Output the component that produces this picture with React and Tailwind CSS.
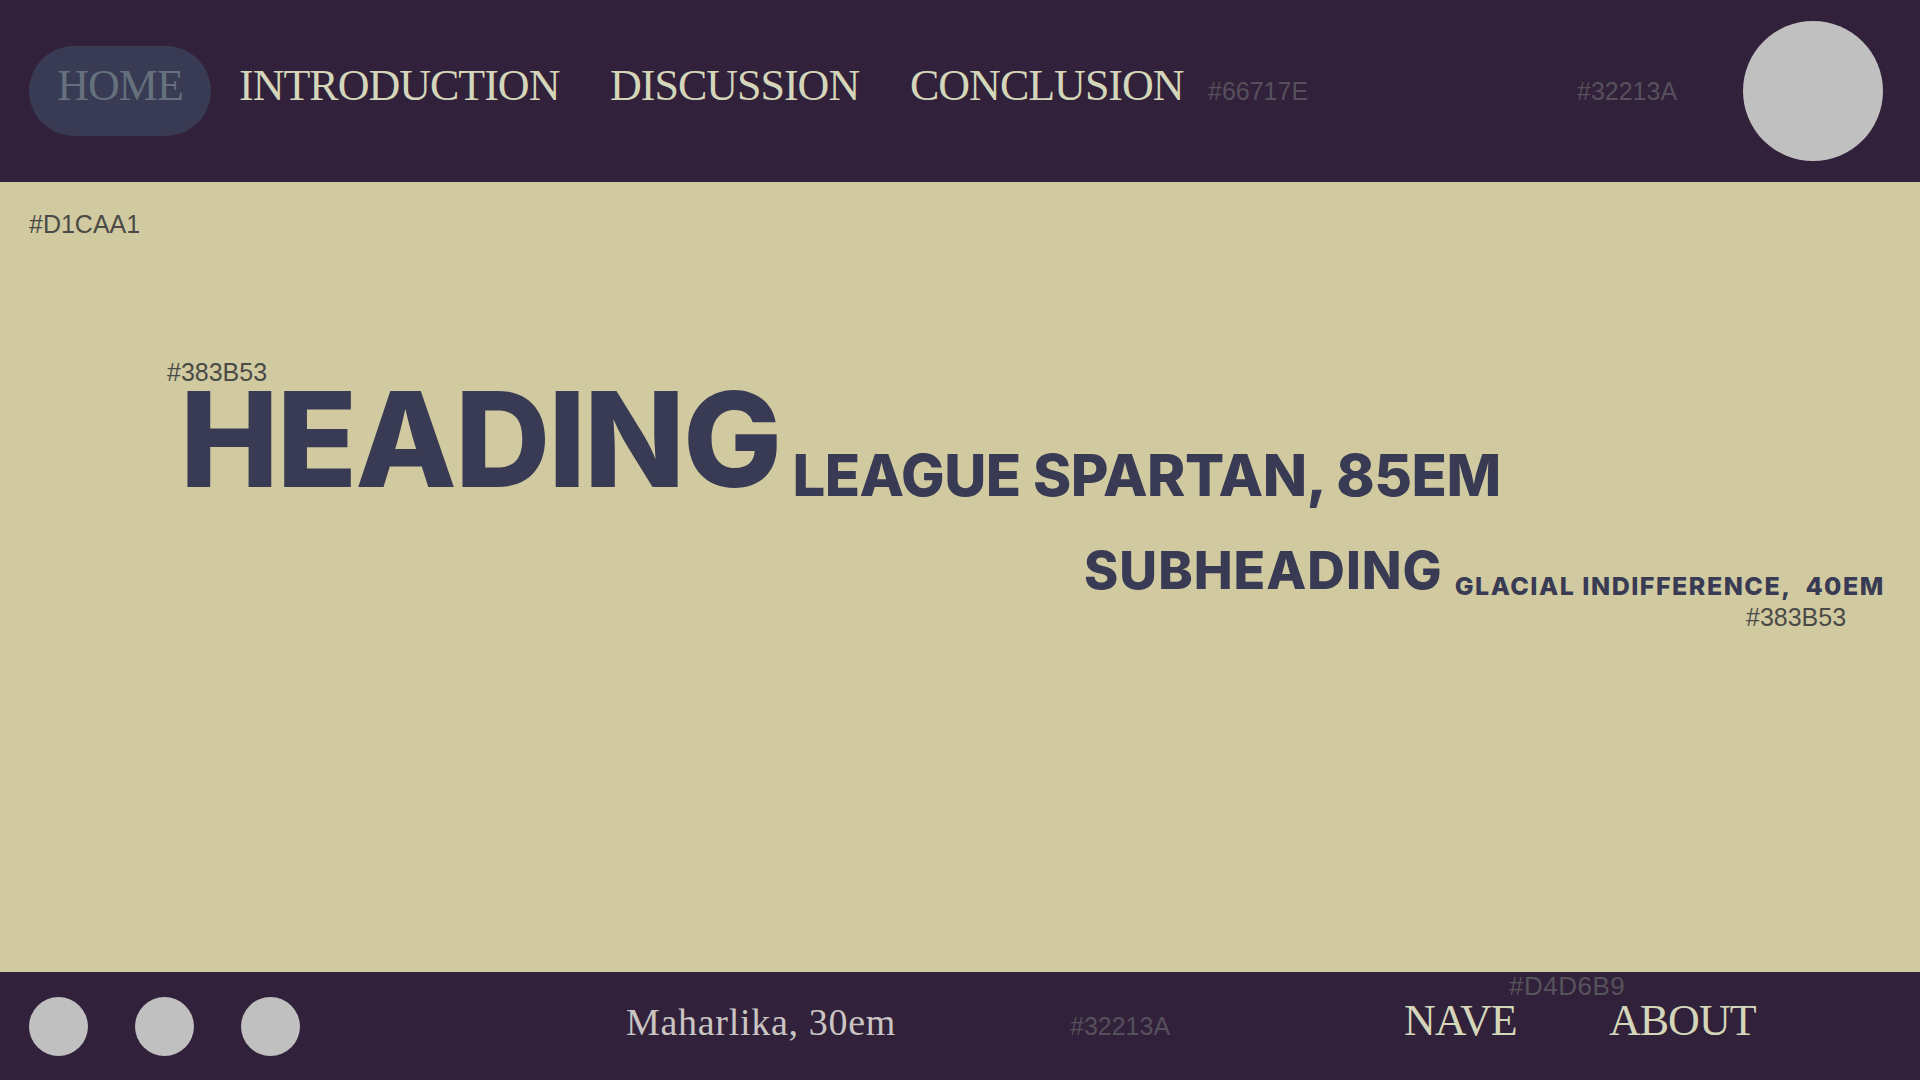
import React from "react";

const label = "font-['Liberation_Sans',sans-serif] text-[25px] leading-[18px] whitespace-nowrap";
const serif = "font-['Liberation_Serif',serif] whitespace-nowrap";
const spartan = "font-['Inter',sans-serif] font-extrabold text-[#383B53] whitespace-nowrap";

const NavItem = ({ children, width }) => (
  <div className={`${width} mb-[10px]`}>
    <span className={`${serif} text-[44px] leading-none tracking-[-1px] text-[#D4D6B9]`}>
      {children}
    </span>
  </div>
);

const Dot = ({ size }) => <div className={`${size} rounded-full bg-[#C0C0C0] shrink-0`}></div>;

const App = () => {
  return (
    <div className="w-[1920px] h-[1080px] flex flex-col overflow-hidden">
      {/* top bar */}
      <header className="h-[182px] bg-[#32213A] flex items-center pl-[29px] shrink-0">
        <div className="w-[182px] h-[90px] rounded-full bg-[#383B53] flex items-center justify-center shrink-0">
          <span className={`${serif} text-[44px] leading-none tracking-[-1px] text-[#66717E] mb-[10px]`}>HOME</span>
        </div>
        <div className="w-[28px] shrink-0"></div>
        <NavItem width="w-[371px]">INTRODUCTION</NavItem>
        <NavItem width="w-[300px]">DISCUSSION</NavItem>
        <NavItem width="w-[298px]">CONCLUSION</NavItem>
        <div className={`${label} w-[369px] text-[#56505c]`}>#66717E</div>
        <div className={`${label} w-[166px] text-[#56505c]`}>#32213A</div>
        <Dot size="w-[140px] h-[140px]" />
      </header>

      {/* body */}
      <main className="h-[790px] bg-[#D1CAA1] flex flex-col pl-[29px] pt-[33px] shrink-0">
        <div className={`${label} text-[#4a4a47]`}>#D1CAA1</div>

        <div className={`${label} text-[#4a4a47] ml-[138px] mt-[130px]`}>#383B53</div>
        <div className="flex items-end ml-[151px] mt-[2px]">
          <span className={`${spartan} text-[132px] leading-[112px] tracking-[-2px]`}>HEADING</span>
          <span className={`${spartan} text-[58px] leading-[40px] tracking-[-0.5px] ml-[12px]`}>
            LEAGUE SPARTAN, 85EM
          </span>
        </div>

        <div className="flex items-end ml-[1055px] mt-[56px]">
          <span className={`${spartan} text-[52px] leading-[40px] tracking-[1px]`}>SUBHEADING</span>
          <span className={`${spartan} text-[25px] leading-[10px] tracking-[1.5px] ml-[12px]`}>
            GLACIAL INDIFFERENCE,&nbsp; 40EM
          </span>
        </div>
        <div className={`${label} text-[#4a4a47] ml-[1717px] mt-[17px]`}>#383B53</div>
      </main>

      {/* bottom bar */}
      <footer className="flex-1 bg-[#32213A] flex items-center pl-[29px]">
        <div className="flex gap-[47px] w-[597px] shrink-0">
          <Dot size="w-[59px] h-[59px]" />
          <Dot size="w-[59px] h-[59px]" />
          <Dot size="w-[59px] h-[59px]" />
        </div>
        <div className="w-[444px] shrink-0 mb-[9px]">
          <span className={`${serif} text-[38px] leading-none tracking-[0.7px] text-[#C9C5C3]`}>Maharlika, 30em</span>
        </div>
        <div className={`${label} w-[334px] text-[#56505c]`}>#32213A</div>
        <div className="self-start mt-[5px] flex flex-col">
          <div className="font-['Liberation_Sans',sans-serif] text-[26px] leading-[18px] tracking-[0.5px] text-[#56535a] ml-[105px]">
            #D4D6B9
          </div>
          <div className="flex mt-[4px]">
            <span className={`${serif} text-[44px] leading-none tracking-[-1px] text-[#D4D6B9] w-[205px]`}>NAVE</span>
            <span className={`${serif} text-[44px] leading-none tracking-[-1px] text-[#D4D6B9]`}>ABOUT</span>
          </div>
        </div>
      </footer>
    </div>
  );
};

export default App;
